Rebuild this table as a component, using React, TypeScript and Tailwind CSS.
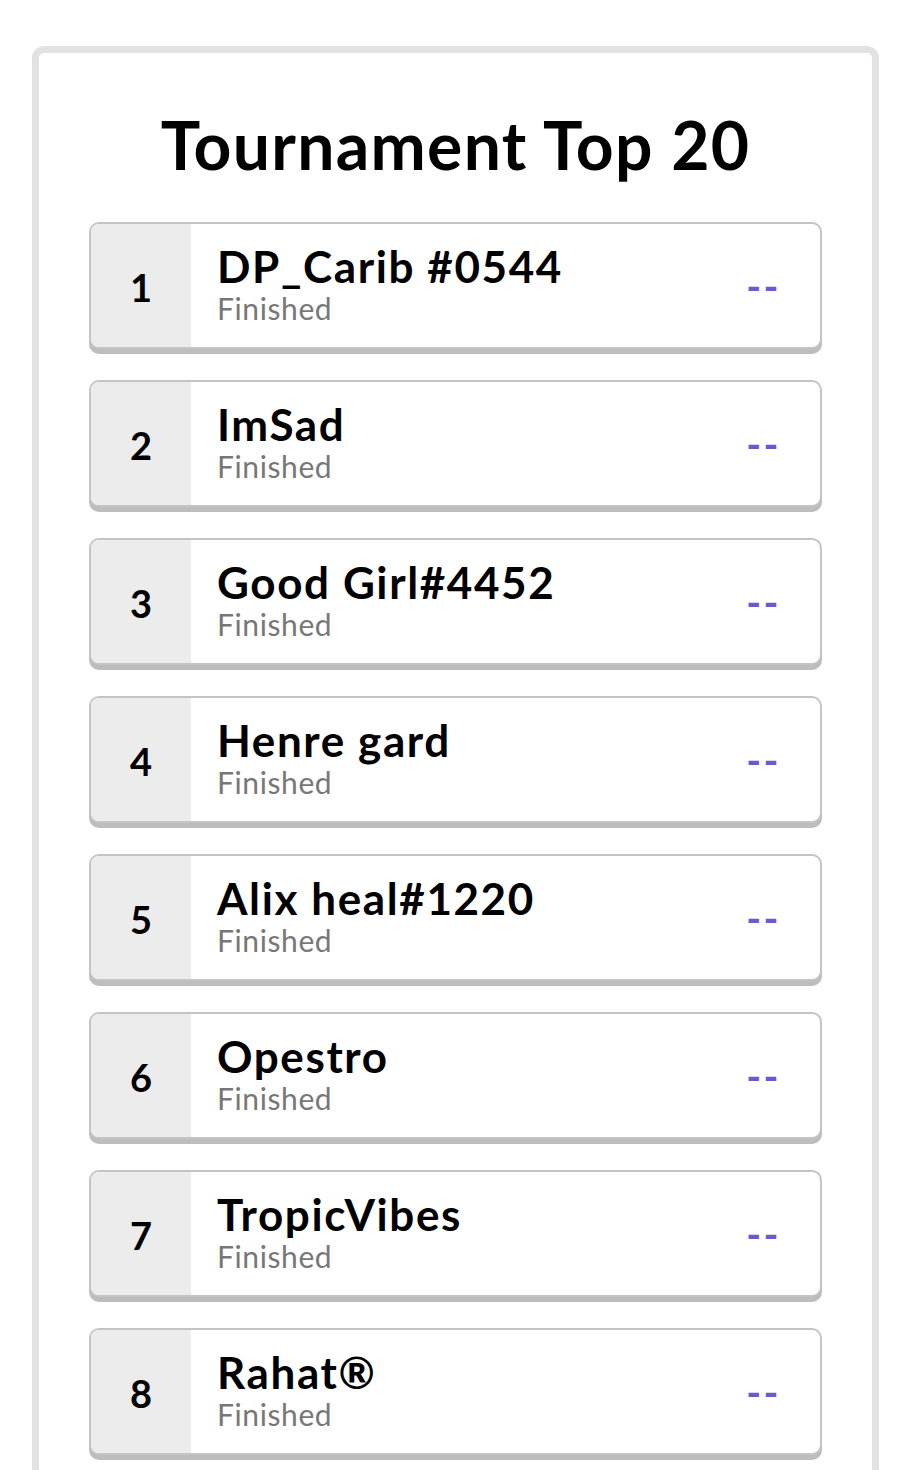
import React from 'react';

interface Player {
  rank: number;
  name: string;
  status: string;
}

const players: Player[] = [
  { rank: 1, name: 'DP_Carib #0544', status: 'Finished' },
  { rank: 2, name: 'ImSad', status: 'Finished' },
  { rank: 3, name: 'Good Girl#4452', status: 'Finished' },
  { rank: 4, name: 'Henre gard', status: 'Finished' },
  { rank: 5, name: 'Alix heal#1220', status: 'Finished' },
  { rank: 6, name: 'Opestro', status: 'Finished' },
  { rank: 7, name: 'TropicVibes', status: 'Finished' },
  { rank: 8, name: 'Rahat®', status: 'Finished' },
];

const PlayerRow: React.FC<{ player: Player }> = ({ player }) => (
  <div className="flex h-[127px] shrink-0 rounded-[10px] border-2 border-[#c4c4c4] bg-white overflow-hidden shadow-[0_5px_0_#bdbdbd]">
    {/* Rank */}
    <div className="w-[100px] shrink-0 bg-[#ececec] flex items-center justify-center text-[38px] font-bold text-black leading-none pt-[2px]">
      {player.rank}
    </div>

    {/* Name + status */}
    <div className="flex-1 flex items-center pl-[26px] pr-[39px]">
      <div className="flex-1 flex flex-col">
        <span className="text-[44px] font-bold text-black leading-[40px] tracking-[1.6px]">{player.name}</span>
        <span className="mt-[4px] text-[30px] text-[#777777] leading-[36px] tracking-[0.6px]">{player.status}</span>
      </div>
      <span className="text-[40px] font-bold text-[#6a5acd] leading-none tracking-[2.5px]">--</span>
    </div>
  </div>
);

export default function App() {
  return (
    <div className="h-[1470px] bg-white font-['Lato','Liberation_Sans',sans-serif] pt-[46px] pl-[32px] overflow-hidden">
      <div className="w-[847px] h-[1480px] border-[7px] border-[#e2e2e2] rounded-[12px] px-[50px] pt-[47px] bg-white">
        <h1 className="text-center text-[66px] font-bold text-black leading-[90px] tracking-[1.3px] mb-[32px]">
          Tournament Top 20
        </h1>
        <div className="flex flex-col gap-[31px]">
          {players.map((p) => (
            <PlayerRow key={p.rank} player={p} />
          ))}
        </div>
      </div>
    </div>
  );
}
